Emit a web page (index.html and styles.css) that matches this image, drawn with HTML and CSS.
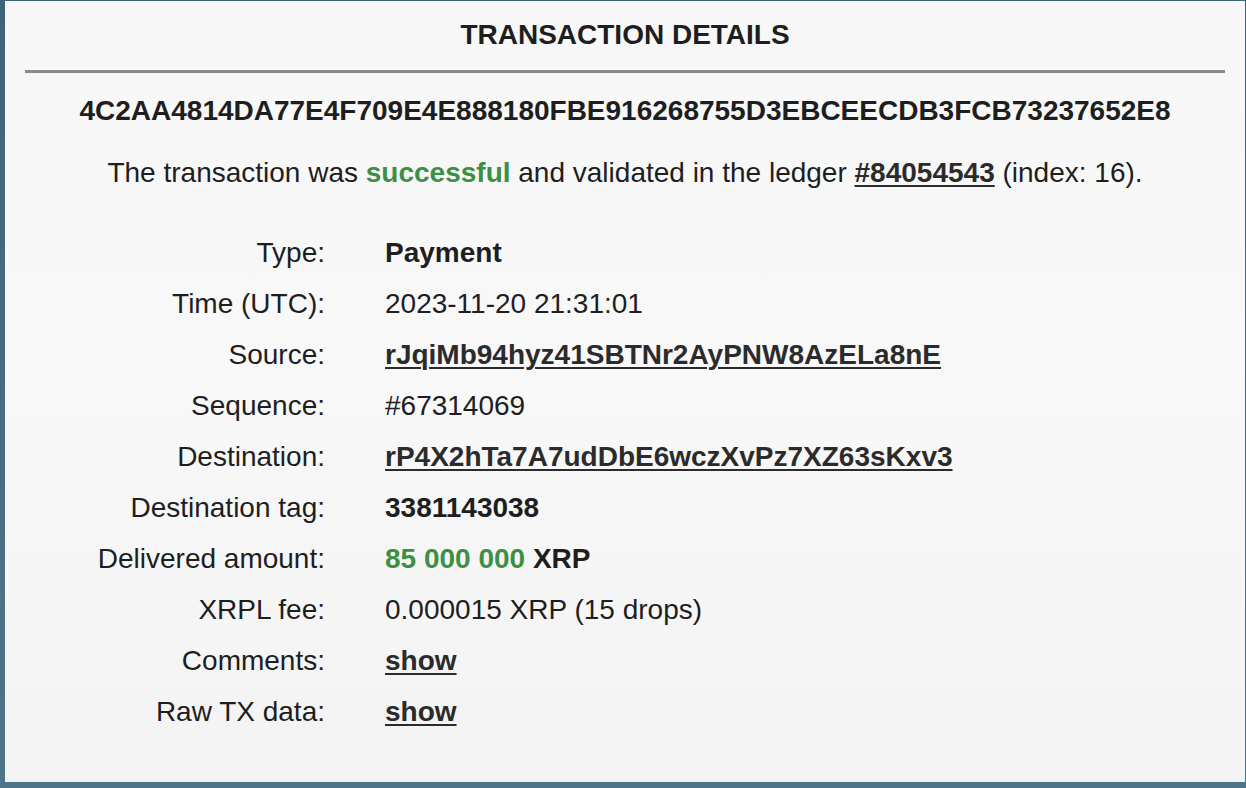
FILE: index.html
```html
<!DOCTYPE html>
<html lang="en">
<head>
<meta charset="utf-8">
<title>Transaction details</title>
<link rel="stylesheet" href="styles.css">
</head>
<body>
<main class="card">
  <h1 class="title">TRANSACTION DETAILS</h1>
  <hr class="rule">
  <div class="hash">4C2AA4814DA77E4F709E4E888180FBE916268755D3EBCEECDB3FCB73237652E8</div>
  <p class="summary">The transaction was <b class="green">successful</b> and validated in the ledger <a class="link" href="#">#84054543</a> (index: 16).</p>
  <div class="details">
    <div class="label">Type:</div>
    <div class="value"><b>Payment</b></div>

    <div class="label">Time (UTC):</div>
    <div class="value">2023-11-20 21:31:01</div>

    <div class="label">Source:</div>
    <div class="value"><a class="link" href="#">rJqiMb94hyz41SBTNr2AyPNW8AzELa8nE</a></div>

    <div class="label">Sequence:</div>
    <div class="value">#67314069</div>

    <div class="label">Destination:</div>
    <div class="value"><a class="link" href="#">rP4X2hTa7A7udDbE6wczXvPz7XZ63sKxv3</a></div>

    <div class="label">Destination tag:</div>
    <div class="value"><b>3381143038</b></div>

    <div class="label">Delivered amount:</div>
    <div class="value"><b class="green">85 000 000</b> <b>XRP</b></div>

    <div class="label">XRPL fee:</div>
    <div class="value">0.000015 XRP (15 drops)</div>

    <div class="label">Comments:</div>
    <div class="value"><a class="link" href="#">show</a></div>

    <div class="label">Raw TX data:</div>
    <div class="value"><a class="link" href="#">show</a></div>
  </div>
</main>
</body>
</html>
```

FILE: styles.css
```css
html, body {
  margin: 0;
  padding: 0;
  height: 100%;
}

body {
  background: linear-gradient(to bottom, #3e6479 0%, #4a6f84 60%, #4f7488 100%);
  font-family: "Liberation Sans", Arial, Helvetica, sans-serif;
  color: #1e1e1e;
  overflow: hidden;
}

.card {
  box-sizing: border-box;
  margin: 1px 1px 0 5px;
  height: 781px;
  padding-top: 18px;
  background: linear-gradient(to bottom, #f7f7f7 0%, #f8f8f8 50%, #f3f3f3 100%);
}

.title {
  margin: 0;
  font-size: 28px;
  line-height: 32px;
  font-weight: bold;
  text-align: center;
  color: #1e1e1e;
}

.rule {
  margin: 19px 20px 0 20px;
  height: 3px;
  border: 0;
  background: #8a8a8a;
}

.hash {
  margin-top: 22px;
  font-size: 28px;
  line-height: 32px;
  font-weight: bold;
  text-align: center;
}

.summary {
  margin: 30px 0 0 0;
  font-size: 28px;
  line-height: 32px;
  text-align: center;
}

.green {
  color: #3d8f44;
  font-weight: bold;
}

.link {
  color: #2b2b2b;
  font-weight: bold;
  text-decoration: underline;
  text-decoration-thickness: 2px;
  text-underline-offset: 3px;
}

.details {
  margin-top: 38px;
  display: grid;
  grid-template-columns: 320px auto;
  column-gap: 60px;
  font-size: 28px;
  line-height: 51px;
}

.label {
  text-align: right;
}

.value {
  text-align: left;
}
```
